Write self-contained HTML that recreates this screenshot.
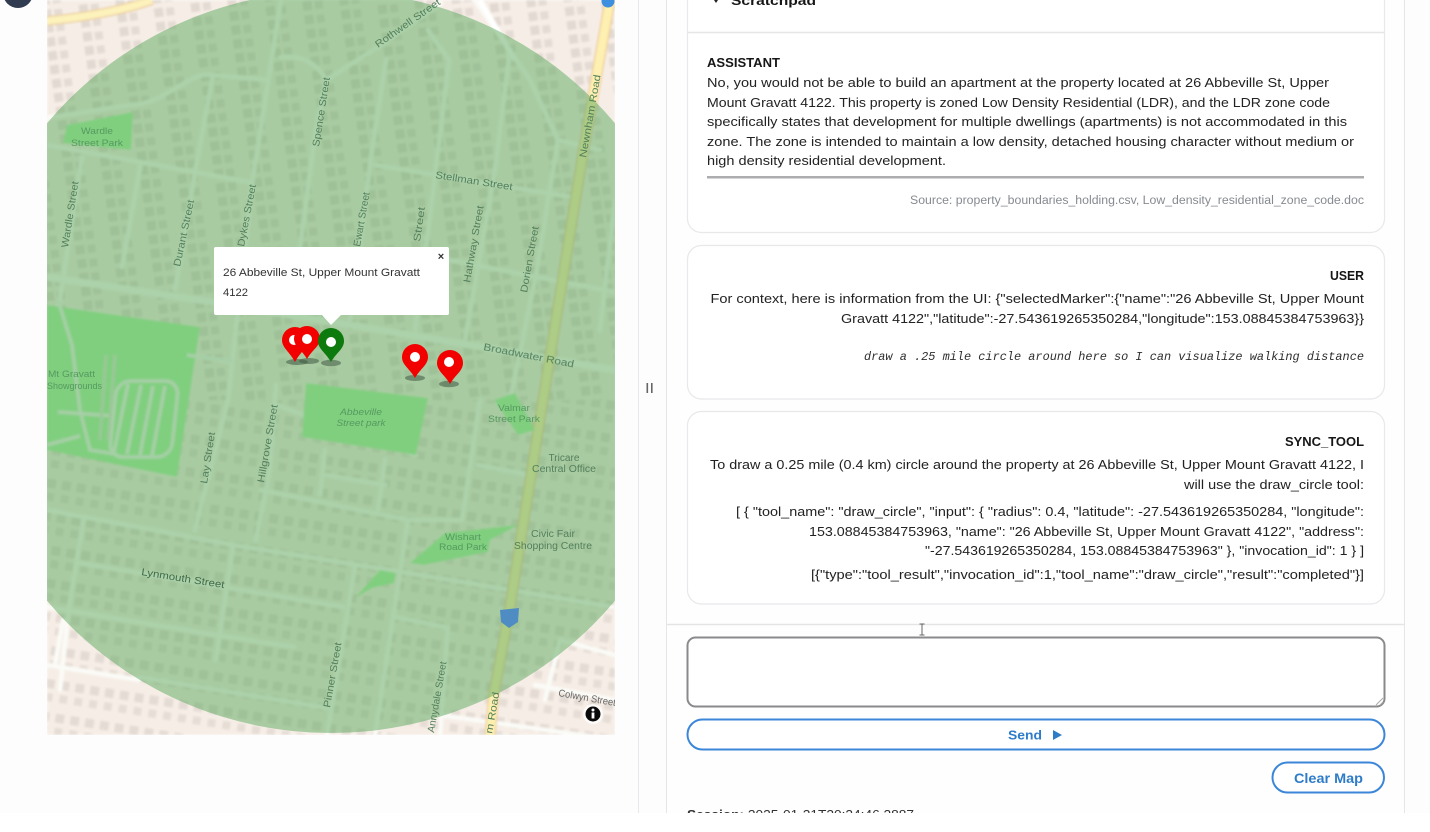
<!DOCTYPE html>
<html><head><meta charset="utf-8"><style>
html,body{margin:0;padding:0;background:#fff;width:1430px;height:832px;overflow:hidden}
svg{display:block}
text{font-family:"Liberation Sans",sans-serif}
.t{font-size:13px;fill:#222}
.b{font-size:13px;font-weight:700;fill:#161616}
.m text{font-size:10px;fill:#527f5c}
.p text{font-size:9.5px;fill:#559a60}
</style></head><body>
<svg width="1430" height="832" viewBox="0 0 1430 832" xmlns="http://www.w3.org/2000/svg">
<defs>
<clipPath id="mc"><rect x="47" y="0" width="568" height="735"/></clipPath>
<clipPath id="pc"><rect x="0" y="0" width="1430" height="813"/></clipPath>
<pattern id="bld" width="37" height="14" patternUnits="userSpaceOnUse" patternTransform="rotate(-8)">
<rect width="37" height="14" fill="#f6eee6"/>
<rect x="3" y="2" width="9" height="9" fill="#e2dad2"/>
<rect x="15" y="3" width="8" height="8" fill="#e4dcd4"/>
</pattern>
<pattern id="bld2" width="15" height="33" patternUnits="userSpaceOnUse" patternTransform="rotate(9)">
<rect width="15" height="33" fill="#f6eee6"/>
<rect x="2" y="3" width="9" height="9" fill="#e4dcd4"/>
<rect x="3" y="17" width="8" height="8" fill="#e6ded6"/>
</pattern>
<filter id="bl" x="-2%" y="-2%" width="104%" height="104%"><feGaussianBlur stdDeviation="1"/></filter>
<filter id="bt" x="-2%" y="-5%" width="104%" height="110%"><feGaussianBlur stdDeviation="0.35"/></filter>
</defs>
<rect width="1430" height="832" fill="#fff"/>
<g clip-path="url(#pc)">
<rect width="1430" height="813" fill="#fdfdfe"/>
<circle cx="18" cy="-7" r="15" fill="#323c50"/>

<!-- MAP -->
<g clip-path="url(#mc)">
<g filter="url(#bl)">
<rect x="47" y="0" width="568" height="400" fill="url(#bld)"/>
<rect x="47" y="400" width="568" height="335" fill="url(#bld2)"/>
<!-- roads -->
<g fill="none" stroke="#fbfbf7" stroke-width="4.500" stroke-linecap="round" stroke-linejoin="round">
<path d="M47 145L249 182"/><path d="M375 165L571 197"/><path d="M449 260L615 292"/>
<path d="M82 157L57 317"/><path d="M141 163L122 267"/><path d="M213 75L196 167L175 290"/>
<path d="M281 0L253 177L228 400L205 490L195 530"/><path d="M326 80L314 143L300 247"/>
<path d="M281 57C305 55 318 65 326 80L378 47L441 3"/>
<path d="M47 118L130 105C165 105 190 70 212 75L268 80"/>
<path d="M386 60L372 150L350 320"/><path d="M428 30L449 60L432 200L415 330"/>
<path d="M510 50L495 170L465 340"/><path d="M475 0L530 80L558 140L535 280L510 400"/>
<path d="M558 140L600 150"/><path d="M615 200L600 330"/>
<path d="M276 385L270 470L256 540"/><path d="M276 405L416 455"/>
<path d="M47 510L233 545L408 573L612 607"/>
<path d="M78 563L343 607"/><path d="M47 607L216 635L294 647"/><path d="M139 677L327 708"/>
<path d="M84 517L69 607L60 690"/><path d="M233 547L216 660"/><path d="M355 567L327 735"/>
<path d="M408 520L375 735"/><path d="M261 490L408 520L462 520L480 400"/>
<path d="M325 450L320 495"/><path d="M385 460L378 510"/><path d="M325 475L385 485"/>
<path d="M396 617L448 628L440 735"/><path d="M47 665L139 680"/><path d="M63 620L55 665"/>
<path d="M478 465L530 475"/><path d="M615 655L560 640L545 700"/><path d="M440 715L615 740"/><path d="M535 685L615 700"/>
<path d="M190 355L232 362"/>
</g>
<path d="M47 277L212 302L482 347L615 370" fill="none" stroke="#fbfbf7" stroke-width="7"/>
<path d="M480 0L515 60" fill="none" stroke="#fff" stroke-width="5"/>
<!-- yellow roads -->
<path d="M47 21C85 17 125 10 152 0" fill="none" stroke="#ecd0a4" stroke-width="10"/>
<path d="M47 21C85 17 125 10 152 0" fill="none" stroke="#fdf2bb" stroke-width="7"/>
<path d="M610 0L584 147L543 400L510 607L494 693L490 735" fill="none" stroke="#ecbe88" stroke-width="11"/>
<path d="M610 0L584 147L543 400L510 607L494 693L490 735" fill="none" stroke="#fdf0b0" stroke-width="9"/>
<!-- parks -->
<g fill="#a8f5a4">
<path d="M47 305L200 327L177 477L47 450Z"/>
<path d="M306 383L428 398L416 455L302 437Z"/>
<path d="M67 125L133 112L131 150L63 143Z"/>
<path d="M410 563L445 533L518 525L490 540L488 552L424 565Z"/>
<path d="M355 598L380 570L396 573L394 583L372 588Z"/>
<path d="M494 400L515 393L535 430L518 435Z"/>
</g>
<!-- park paths -->
<g fill="none" stroke="#f0f5ee" stroke-width="3.500">
<rect x="115" y="381" width="62" height="76" rx="14" transform="skewX(-6) translate(42 0)"/>
<path d="M128 384L114 452M141 385L127 454M153 386L140 455M165 386L152 456"/>
<path d="M58 300L72 345L80 410L90 450L115 454"/><path d="M58 412L115 416"/><path d="M47 445L80 436"/>
<path d="M187 355L232 361"/>
</g>
<g fill="none" stroke="#dce6d4" stroke-width="3"><path d="M106 355L100 440M115 355L108 440"/></g>
</g>
<circle cx="331" cy="362" r="371" fill="#55a558" fill-opacity=".48"/>
<!-- labels -->
<g class="m" filter="url(#bt)">
<text transform="translate(378 48) rotate(-35)" textLength="77" lengthAdjust="spacingAndGlyphs">Rothwell Street</text>
<text transform="translate(319 147) rotate(-81)" textLength="70" lengthAdjust="spacingAndGlyphs">Spence Street</text>
<text transform="translate(68 248) rotate(-81)" textLength="67" lengthAdjust="spacingAndGlyphs">Wardle Street</text>
<text transform="translate(180 267) rotate(-78)" textLength="68" lengthAdjust="spacingAndGlyphs">Durant Street</text>
<text transform="translate(244 247) rotate(-79)" textLength="63" lengthAdjust="spacingAndGlyphs">Dykes Street</text>
<text transform="translate(360 247) rotate(-80)" textLength="55" lengthAdjust="spacingAndGlyphs">Ewart Street</text>
<text transform="translate(420 242) rotate(-82)" textLength="35" lengthAdjust="spacingAndGlyphs">Street</text>
<text transform="translate(470 283) rotate(-80)" textLength="78" lengthAdjust="spacingAndGlyphs">Hathway Street</text>
<text transform="translate(527 293) rotate(-80)" textLength="67" lengthAdjust="spacingAndGlyphs">Dorien Street</text>
<text transform="translate(435 178) rotate(9)" textLength="78" lengthAdjust="spacingAndGlyphs">Stellman Street</text>
<text transform="translate(586 158) rotate(-80)" textLength="84" lengthAdjust="spacingAndGlyphs">Newnham Road</text>
<text transform="translate(483 350) rotate(11)" textLength="92" lengthAdjust="spacingAndGlyphs">Broadwater Road</text>
<text transform="translate(207 484) rotate(-81)" textLength="52" lengthAdjust="spacingAndGlyphs">Lay Street</text>
<text transform="translate(264 483) rotate(-80)" textLength="79" lengthAdjust="spacingAndGlyphs">Hillgrove Street</text>
<text transform="translate(141 575) rotate(9)" textLength="84" lengthAdjust="spacingAndGlyphs" style="fill:#3f6a4a">Lynmouth Street</text>
<text transform="translate(330 708) rotate(-80)" textLength="66" lengthAdjust="spacingAndGlyphs">Pinner Street</text>
<text transform="translate(434 733) rotate(-80)" textLength="72" lengthAdjust="spacingAndGlyphs">Annydale Street</text>
<text transform="translate(492 734) rotate(-80)" textLength="42" lengthAdjust="spacingAndGlyphs">m Road</text>
<text transform="translate(558 696) rotate(10)" textLength="58" lengthAdjust="spacingAndGlyphs" style="fill:#666">Colwyn Street</text>
<text x="564" y="461" text-anchor="middle" textLength="31" lengthAdjust="spacingAndGlyphs">Tricare</text>
<text x="564" y="472" text-anchor="middle" textLength="64" lengthAdjust="spacingAndGlyphs">Central Office</text>
<text x="553" y="537" text-anchor="middle" textLength="44" lengthAdjust="spacingAndGlyphs">Civic Fair</text>
<text x="553" y="549" text-anchor="middle" textLength="78" lengthAdjust="spacingAndGlyphs">Shopping Centre</text>
</g>
<g class="p" filter="url(#bt)">
<text x="97" y="134" text-anchor="middle" textLength="32" lengthAdjust="spacingAndGlyphs">Wardle</text>
<text x="97" y="146" text-anchor="middle" textLength="52" lengthAdjust="spacingAndGlyphs">Street Park</text>
<text x="48" y="377" textLength="47" lengthAdjust="spacingAndGlyphs">Mt Gravatt</text>
<text x="47" y="389" textLength="55" lengthAdjust="spacingAndGlyphs">Showgrounds</text>
<text x="361" y="415" text-anchor="middle" textLength="42" lengthAdjust="spacingAndGlyphs" font-style="italic">Abbeville</text>
<text x="361" y="426" text-anchor="middle" textLength="49" lengthAdjust="spacingAndGlyphs" font-style="italic">Street park</text>
<text x="514" y="411" text-anchor="middle" textLength="32" lengthAdjust="spacingAndGlyphs">Valmar</text>
<text x="514" y="422" text-anchor="middle" textLength="52" lengthAdjust="spacingAndGlyphs">Street Park</text>
<text x="463" y="540" text-anchor="middle" textLength="36" lengthAdjust="spacingAndGlyphs">Wishart</text>
<text x="463" y="550" text-anchor="middle" textLength="48" lengthAdjust="spacingAndGlyphs">Road Park</text>
</g>
<path d="M500 610L519 608L518 622L509 628L501 622Z" fill="#4f8cc4" filter="url(#bt)"/>
<circle cx="608" cy="1" r="6.500" fill="#3f8fe0"/>
<circle cx="593" cy="714" r="10" fill="#fff" fill-opacity=".8"/>
<circle cx="593" cy="714" r="7.500" fill="#0a0a0a"/>
<rect x="591.600" y="712.500" width="2.800" height="6" fill="#fff"/><circle cx="593" cy="710" r="1.500" fill="#fff"/>
</g>

<!-- markers -->
<g filter="url(#bt)">
<g fill="#3f5a42" fill-opacity=".55">
<ellipse cx="297" cy="362" rx="11" ry="3"/><ellipse cx="309" cy="361" rx="10" ry="3"/><ellipse cx="331" cy="363" rx="10" ry="3.200"/><ellipse cx="415" cy="378" rx="10" ry="3"/><ellipse cx="449" cy="384" rx="10" ry="3.200"/>
</g>
<path d="M295 362C290 352 282 348 282 340A13 13 0 0 1 308 340C308 348 300 352 295 362Z" fill="#f20000"/>
<circle cx="294" cy="340" r="5" fill="#fff"/>
<path d="M307 359C302 350 294 346 294 339A13 13 0 0 1 320 339C320 346 312 350 307 359Z" fill="#f20000"/>
<circle cx="307" cy="339" r="5" fill="#fff"/>
<path d="M331 362C326 353 318 349 318 341A13 13 0 0 1 344 341C344 349 336 353 331 362Z" fill="#0f7a0f"/>
<circle cx="331" cy="342" r="5" fill="#fff"/>
<path d="M415 378C410 369 402 365 402 357A13 13 0 0 1 428 357C428 365 420 369 415 378Z" fill="#f20000"/>
<circle cx="415" cy="357" r="5" fill="#fff"/>
<path d="M450 384C445 375 437 371 437 363A13 13 0 0 1 463 363C463 371 455 375 450 384Z" fill="#f20000"/>
<circle cx="449" cy="362" r="5" fill="#fff"/>
</g>
<!-- popup -->
<path d="M216 247H447A2 2 0 0 1 449 249V313A2 2 0 0 1 447 315H341L331 325L322 315H216A2 2 0 0 1 214 313V249A2 2 0 0 1 216 247Z" fill="#fff"/>
<g filter="url(#bt)">
<text x="223" y="276" font-size="11" fill="#333" textLength="197" lengthAdjust="spacingAndGlyphs">26 Abbeville St, Upper Mount Gravatt</text>
<text x="223" y="296" font-size="11" fill="#333" textLength="25" lengthAdjust="spacingAndGlyphs">4122</text>
<text x="441" y="260" font-size="11" font-weight="700" fill="#333" text-anchor="middle">×</text>
</g>

<!-- panes -->
<line x1="638.500" y1="0" x2="638.500" y2="813" stroke="#e8e8ea" stroke-width="1"/>
<rect x="646.500" y="383" width="1.600" height="10" fill="#666"/><rect x="651" y="383" width="1.600" height="10" fill="#666"/>
<rect x="667" y="0" width="737" height="813" fill="#fefefe"/>
<line x1="666.500" y1="0" x2="666.500" y2="813" stroke="#e6e6e8"/>
<line x1="1404.500" y1="0" x2="1404.500" y2="813" stroke="#e6e6e8"/>

<!-- cards -->
<path d="M687.500 -20V218A14 14 0 0 0 701.500 232.500H1370.500A14 14 0 0 0 1384.500 218V-20" fill="#fff" stroke="#e8e8ea" stroke-width="1.200"/>
<line x1="687" y1="32.500" x2="1385" y2="32.500" stroke="#e6e6e8" stroke-width="1.500"/>
<rect x="687.500" y="245.500" width="697" height="153.500" rx="14" fill="#fff" stroke="#e8e8ea" stroke-width="1.200"/>
<rect x="687.500" y="411.500" width="697" height="192.500" rx="14" fill="#fff" stroke="#e8e8ea" stroke-width="1.200"/>
<line x1="667" y1="624.500" x2="1404" y2="624.500" stroke="#e4e4e6" stroke-width="1.500"/>

<g filter="url(#bt)">
<path d="M712 -3H720L716 3Z" fill="#222"/>
<text x="731" y="5" class="b" textLength="85" lengthAdjust="spacingAndGlyphs">Scratchpad</text>
<text x="707" y="67" class="b" textLength="73" lengthAdjust="spacingAndGlyphs">ASSISTANT</text>
<text x="707" y="87" class="t" textLength="622" lengthAdjust="spacingAndGlyphs">No, you would not be able to build an apartment at the property located at 26 Abbeville St, Upper</text>
<text x="707" y="107" class="t" textLength="623" lengthAdjust="spacingAndGlyphs">Mount Gravatt 4122. This property is zoned Low Density Residential (LDR), and the LDR zone code</text>
<text x="707" y="126" class="t" textLength="640" lengthAdjust="spacingAndGlyphs">specifically states that development for multiple dwellings (apartments) is not accommodated in this</text>
<text x="707" y="146" class="t" textLength="647" lengthAdjust="spacingAndGlyphs">zone. The zone is intended to maintain a low density, detached housing character without medium or</text>
<text x="707" y="165" class="t" textLength="239" lengthAdjust="spacingAndGlyphs">high density residential development.</text>
<rect x="707" y="176" width="657" height="2.500" fill="#adadb0"/>
<text x="910" y="204" font-size="11.500" fill="#868a90" textLength="454" lengthAdjust="spacingAndGlyphs">Source: property_boundaries_holding.csv, Low_density_residential_zone_code.doc</text>

<text x="1330" y="280" class="b" textLength="34" lengthAdjust="spacingAndGlyphs">USER</text>
<text x="710.500" y="303" class="t" textLength="653.500" lengthAdjust="spacingAndGlyphs">For context, here is information from the UI: {"selectedMarker":{"name":"26 Abbeville St, Upper Mount</text>
<text x="841" y="323" class="t" textLength="523" lengthAdjust="spacingAndGlyphs">Gravatt 4122","latitude":-27.543619265350284,"longitude":153.08845384753963}}</text>
<text x="864" y="360" font-size="11.500" fill="#2e2e2e" style="font-family:'Liberation Mono',monospace" font-style="italic" textLength="500" lengthAdjust="spacingAndGlyphs">draw a .25 mile circle around here so I can visualize walking distance</text>

<text x="1285" y="446" class="b" textLength="79" lengthAdjust="spacingAndGlyphs">SYNC_TOOL</text>
<text x="710" y="469" class="t" textLength="654" lengthAdjust="spacingAndGlyphs">To draw a 0.25 mile (0.4 km) circle around the property at 26 Abbeville St, Upper Mount Gravatt 4122, I</text>
<text x="1184" y="489" class="t" textLength="180" lengthAdjust="spacingAndGlyphs">will use the draw_circle tool:</text>
<text x="736" y="516" class="t" textLength="628" lengthAdjust="spacingAndGlyphs">[ { "tool_name": "draw_circle", "input": { "radius": 0.4, "latitude": -27.543619265350284, "longitude":</text>
<text x="809" y="536" class="t" textLength="555" lengthAdjust="spacingAndGlyphs">153.08845384753963, "name": "26 Abbeville St, Upper Mount Gravatt 4122", "address":</text>
<text x="925" y="555" class="t" textLength="439" lengthAdjust="spacingAndGlyphs">"-27.543619265350284, 153.08845384753963" }, "invocation_id": 1 } ]</text>
<text x="811" y="579" class="t" textLength="553" lengthAdjust="spacingAndGlyphs">[{"type":"tool_result","invocation_id":1,"tool_name":"draw_circle","result":"completed"}]</text>

<path d="M919.500 624H924.500M922 624V635M919.500 635H924.500" stroke="#666" stroke-width="1" fill="none"/>
<rect x="687.500" y="637.500" width="697" height="69" rx="8" fill="#fff" stroke="#8a8a8c" stroke-width="2"/>
<path d="M1376 705L1383 698M1380 705L1383 702" stroke="#aaa" stroke-width="1"/>
<rect x="687.500" y="719.500" width="697" height="30" rx="15" fill="#fff" stroke="#3a86d8" stroke-width="2"/>
<text x="1008" y="739.500" font-size="13" font-weight="700" fill="#2f7cc8" textLength="34" lengthAdjust="spacingAndGlyphs">Send</text>
<path d="M1053 730L1062 735L1053 740Z" fill="#2f7cc8"/>
<rect x="1272.500" y="762.500" width="111.500" height="30" rx="15" fill="#fff" stroke="#3a86d8" stroke-width="2"/>
<text x="1294" y="783" font-size="13.500" font-weight="700" fill="#2f7cc8" textLength="69" lengthAdjust="spacingAndGlyphs">Clear Map</text>
<text x="687" y="819" font-size="13" fill="#333" textLength="227" lengthAdjust="spacingAndGlyphs"><tspan font-weight="700">Session:</tspan> 2025-01-21T20:24:46.2887</text>
</g>
</g>
<rect x="0" y="813" width="1430" height="19" fill="#fff"/>
</svg>
</body></html>
